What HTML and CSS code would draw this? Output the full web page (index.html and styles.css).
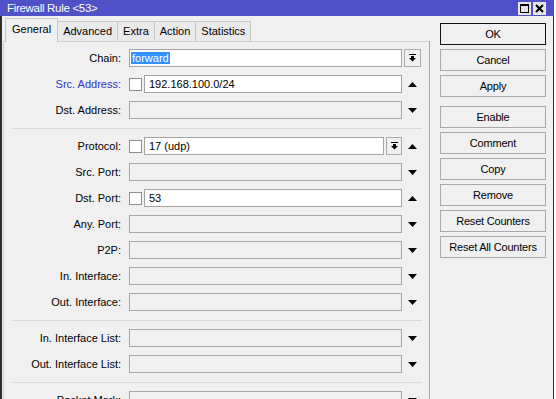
FILE: index.html
```html
<!DOCTYPE html>
<html lang="en">
<head>
<meta charset="utf-8">
<title>Firewall Rule &lt;53&gt;</title>
<link rel="stylesheet" href="styles.css">
</head>
<body>

<div class="win">
    <div class="titlebar">
        <span class="title">Firewall Rule &lt;53&gt;</span>
        <div class="wbtns">
            <span class="wbtn"><svg width="9" height="9" viewBox="0 0 9 9"><rect x="0.5" y="0.5" width="8" height="8" fill="none" stroke="#000"/><rect x="0" y="0" width="9" height="2" fill="#000"/></svg></span>
            <span class="wbtn"><svg width="9" height="9" viewBox="0 0 9 9"><path d="M1 1 L8 8 M8 1 L1 8" stroke="#000" stroke-width="2"/></svg></span>
        </div>
    </div>

    <div class="winbody">
        <div class="main">
            <div class="tabs">
                <span class="tab sel">General</span>
                <span class="tab">Advanced</span>
                <span class="tab">Extra</span>
                <span class="tab">Action</span>
                <span class="tab">Statistics</span>
            </div>

            <div class="panel">
                <div class="row">
                    <span class="lbl">Chain:</span>
                    <div class="fld">
                        <span class="inp chain"><span class="hl">forward</span></span>
                    </div>
                    <span class="arr"><span class="ddbtn"><svg width="7" height="8" viewBox="0 0 7 8"><rect x="0" y="0" width="7" height="1" fill="#000"/><rect x="2" y="2" width="3" height="2" fill="#000"/><polygon points="0,4 7,4 3.5,7.5" fill="#000"/></svg></span></span>
                </div>
                <div class="row">
                    <span class="lbl blue">Src. Address:</span>
                    <div class="fld">
                        <span class="cb"></span>
                        <span class="inp">192.168.100.0/24</span>
                    </div>
                    <span class="arr"><svg width="9" height="5" viewBox="0 0 9 5"><polygon points="0,5 4.5,0 9,5" fill="#000"/></svg></span>
                </div>
                <div class="row">
                    <span class="lbl">Dst. Address:</span>
                    <div class="fld"><span class="inp off"></span></div>
                    <span class="arr"><svg width="9" height="5" viewBox="0 0 9 5"><polygon points="0,0 9,0 4.5,5" fill="#000"/></svg></span>
                </div>

                <div class="sep"></div>

                <div class="row">
                    <span class="lbl">Protocol:</span>
                    <div class="fld">
                        <span class="cb"></span>
                        <span class="inp">17 (udp)</span>
                        <span class="ddbtn inline"><svg width="7" height="8" viewBox="0 0 7 8"><rect x="0" y="0" width="7" height="1" fill="#000"/><rect x="2" y="2" width="3" height="2" fill="#000"/><polygon points="0,4 7,4 3.5,7.5" fill="#000"/></svg></span>
                    </div>
                    <span class="arr"><svg width="9" height="5" viewBox="0 0 9 5"><polygon points="0,5 4.5,0 9,5" fill="#000"/></svg></span>
                </div>
                <div class="row">
                    <span class="lbl">Src. Port:</span>
                    <div class="fld"><span class="inp off"></span></div>
                    <span class="arr"><svg width="9" height="5" viewBox="0 0 9 5"><polygon points="0,0 9,0 4.5,5" fill="#000"/></svg></span>
                </div>
                <div class="row">
                    <span class="lbl">Dst. Port:</span>
                    <div class="fld">
                        <span class="cb"></span>
                        <span class="inp">53</span>
                    </div>
                    <span class="arr"><svg width="9" height="5" viewBox="0 0 9 5"><polygon points="0,5 4.5,0 9,5" fill="#000"/></svg></span>
                </div>
                <div class="row">
                    <span class="lbl">Any. Port:</span>
                    <div class="fld"><span class="inp off"></span></div>
                    <span class="arr"><svg width="9" height="5" viewBox="0 0 9 5"><polygon points="0,0 9,0 4.5,5" fill="#000"/></svg></span>
                </div>
                <div class="row">
                    <span class="lbl">P2P:</span>
                    <div class="fld"><span class="inp off"></span></div>
                    <span class="arr"><svg width="9" height="5" viewBox="0 0 9 5"><polygon points="0,0 9,0 4.5,5" fill="#000"/></svg></span>
                </div>
                <div class="row">
                    <span class="lbl">In. Interface:</span>
                    <div class="fld"><span class="inp off"></span></div>
                    <span class="arr"><svg width="9" height="5" viewBox="0 0 9 5"><polygon points="0,0 9,0 4.5,5" fill="#000"/></svg></span>
                </div>
                <div class="row">
                    <span class="lbl">Out. Interface:</span>
                    <div class="fld"><span class="inp off"></span></div>
                    <span class="arr"><svg width="9" height="5" viewBox="0 0 9 5"><polygon points="0,0 9,0 4.5,5" fill="#000"/></svg></span>
                </div>

                <div class="sep"></div>

                <div class="row">
                    <span class="lbl">In. Interface List:</span>
                    <div class="fld"><span class="inp off"></span></div>
                    <span class="arr"><svg width="9" height="5" viewBox="0 0 9 5"><polygon points="0,0 9,0 4.5,5" fill="#000"/></svg></span>
                </div>
                <div class="row">
                    <span class="lbl">Out. Interface List:</span>
                    <div class="fld"><span class="inp off"></span></div>
                    <span class="arr"><svg width="9" height="5" viewBox="0 0 9 5"><polygon points="0,0 9,0 4.5,5" fill="#000"/></svg></span>
                </div>

                <div class="sep"></div>

                <div class="row">
                    <span class="lbl">Packet Mark:</span>
                    <div class="fld"><span class="inp off"></span></div>
                    <span class="arr"><svg width="9" height="5" viewBox="0 0 9 5"><polygon points="0,0 9,0 4.5,5" fill="#000"/></svg></span>
                </div>
            </div>
        </div>

        <div class="side">
            <span class="btn def">OK</span>
            <span class="btn">Cancel</span>
            <span class="btn">Apply</span>
            <span class="btn gap">Enable</span>
            <span class="btn">Comment</span>
            <span class="btn">Copy</span>
            <span class="btn">Remove</span>
            <span class="btn">Reset Counters</span>
            <span class="btn">Reset All Counters</span>
        </div>
    </div>
</div>

</body>
</html>
```

FILE: styles.css
```css
* {
    box-sizing: border-box;
}

body {
    margin: 0px;
    padding: 0px;
    background-color: #ffffff;
    font-family: "Liberation Sans", Arial, sans-serif;
    font-size: 11px;
    color: #000000;
    overflow: hidden;
}

.win {
    width: 554px;
    height: 399px;
    overflow: hidden;
}

/* title bar */
.titlebar {
    height: 16px;
    padding: 0px 8px 0px 7px;
    display: flex;
    align-items: center;
    justify-content: space-between;
    background-color: #4f52c6;
    color: #ffffff;
}

.title {
    font-size: 11.5px;
    letter-spacing: -0.3px;
}

.wbtns {
    display: flex;
    gap: 2px;
}

.wbtn {
    width: 13px;
    height: 13px;
    display: flex;
    align-items: center;
    justify-content: center;
    background-color: #e6e6e6;
}

/* window body */
.winbody {
    height: 383px;
    display: flex;
    background-color: #f0f0f0;
    border-left: 2px solid #2e2e2e;
    border-right: 1px solid #2e2e2e;
}

.main {
    width: 427px;
    margin-left: 1px;
    display: flex;
    flex-direction: column;
}

.tabs {
    height: 25px;
    padding: 2px 0px 0px 2px;
    display: flex;
    align-items: flex-end;
}

.tab {
    height: 20px;
    line-height: 19px;
    padding: 0px 5px;
    margin-right: -1px;
    border: 1px solid #c6c6c6;
    border-bottom: 0px;
    background-color: #eaeaea;
}

.tab.sel {
    height: 24px;
    line-height: 21px;
    padding: 0px 6px;
    margin-bottom: -1px;
    position: relative;
    z-index: 1;
    background-color: #f0f0f0;
}

.panel {
    flex: 1;
    padding-top: 7px;
    display: flex;
    flex-direction: column;
    border: 1px solid #cfcfcf;
    border-right-color: #a4a4a4;
    border-bottom: 0px;
}

.row {
    height: 18px;
    margin-bottom: 8px;
    display: flex;
    align-items: center;
    flex-shrink: 0;
}

.lbl {
    width: 125px;
    padding-right: 8px;
    text-align: right;
    white-space: nowrap;
}

.lbl.blue {
    color: #3434c4;
}

.fld {
    width: 273px;
    height: 18px;
    display: flex;
    align-items: center;
}

.inp {
    flex: 1;
    height: 18px;
    padding-left: 4px;
    line-height: 16px;
    border: 1px solid #a3a3a3;
    background-color: #ffffff;
    white-space: nowrap;
}

.inp.off {
    background-color: #f0f0f0;
    border-color: #a8a8a8;
}

.inp.chain {
    padding-left: 1px;
}

.hl {
    padding: 0px 1px;
    background-color: #3391ff;
    color: #ffffff;
}

.cb {
    width: 13px;
    height: 13px;
    margin-right: 2px;
    border: 1px solid #8e8e8e;
    background-color: #ffffff;
}

.ddbtn {
    width: 17px;
    height: 18px;
    display: flex;
    align-items: center;
    justify-content: center;
    border: 1px solid #ababab;
    background-color: #f0f0f0;
}

.ddbtn.inline {
    width: 16px;
    margin-left: 2px;
}

.arr {
    width: 20px;
    height: 18px;
    display: flex;
    align-items: center;
    justify-content: center;
}

.sep {
    height: 1px;
    margin: 1px 7px 8px 9px;
    background-color: #d9d9d9;
    flex-shrink: 0;
}

/* right hand buttons */
.side {
    width: 106px;
    margin-left: 10px;
    padding-top: 7px;
    display: flex;
    flex-direction: column;
}

.btn {
    height: 22px;
    margin-bottom: 4px;
    line-height: 20px;
    text-align: center;
    border: 1px solid #a9a9a9;
    background-color: #f0f0f0;
    white-space: nowrap;
    letter-spacing: -0.2px;
}

.btn.def {
    border-color: #111111;
}

.btn.gap {
    margin-top: 5px;
}
```
